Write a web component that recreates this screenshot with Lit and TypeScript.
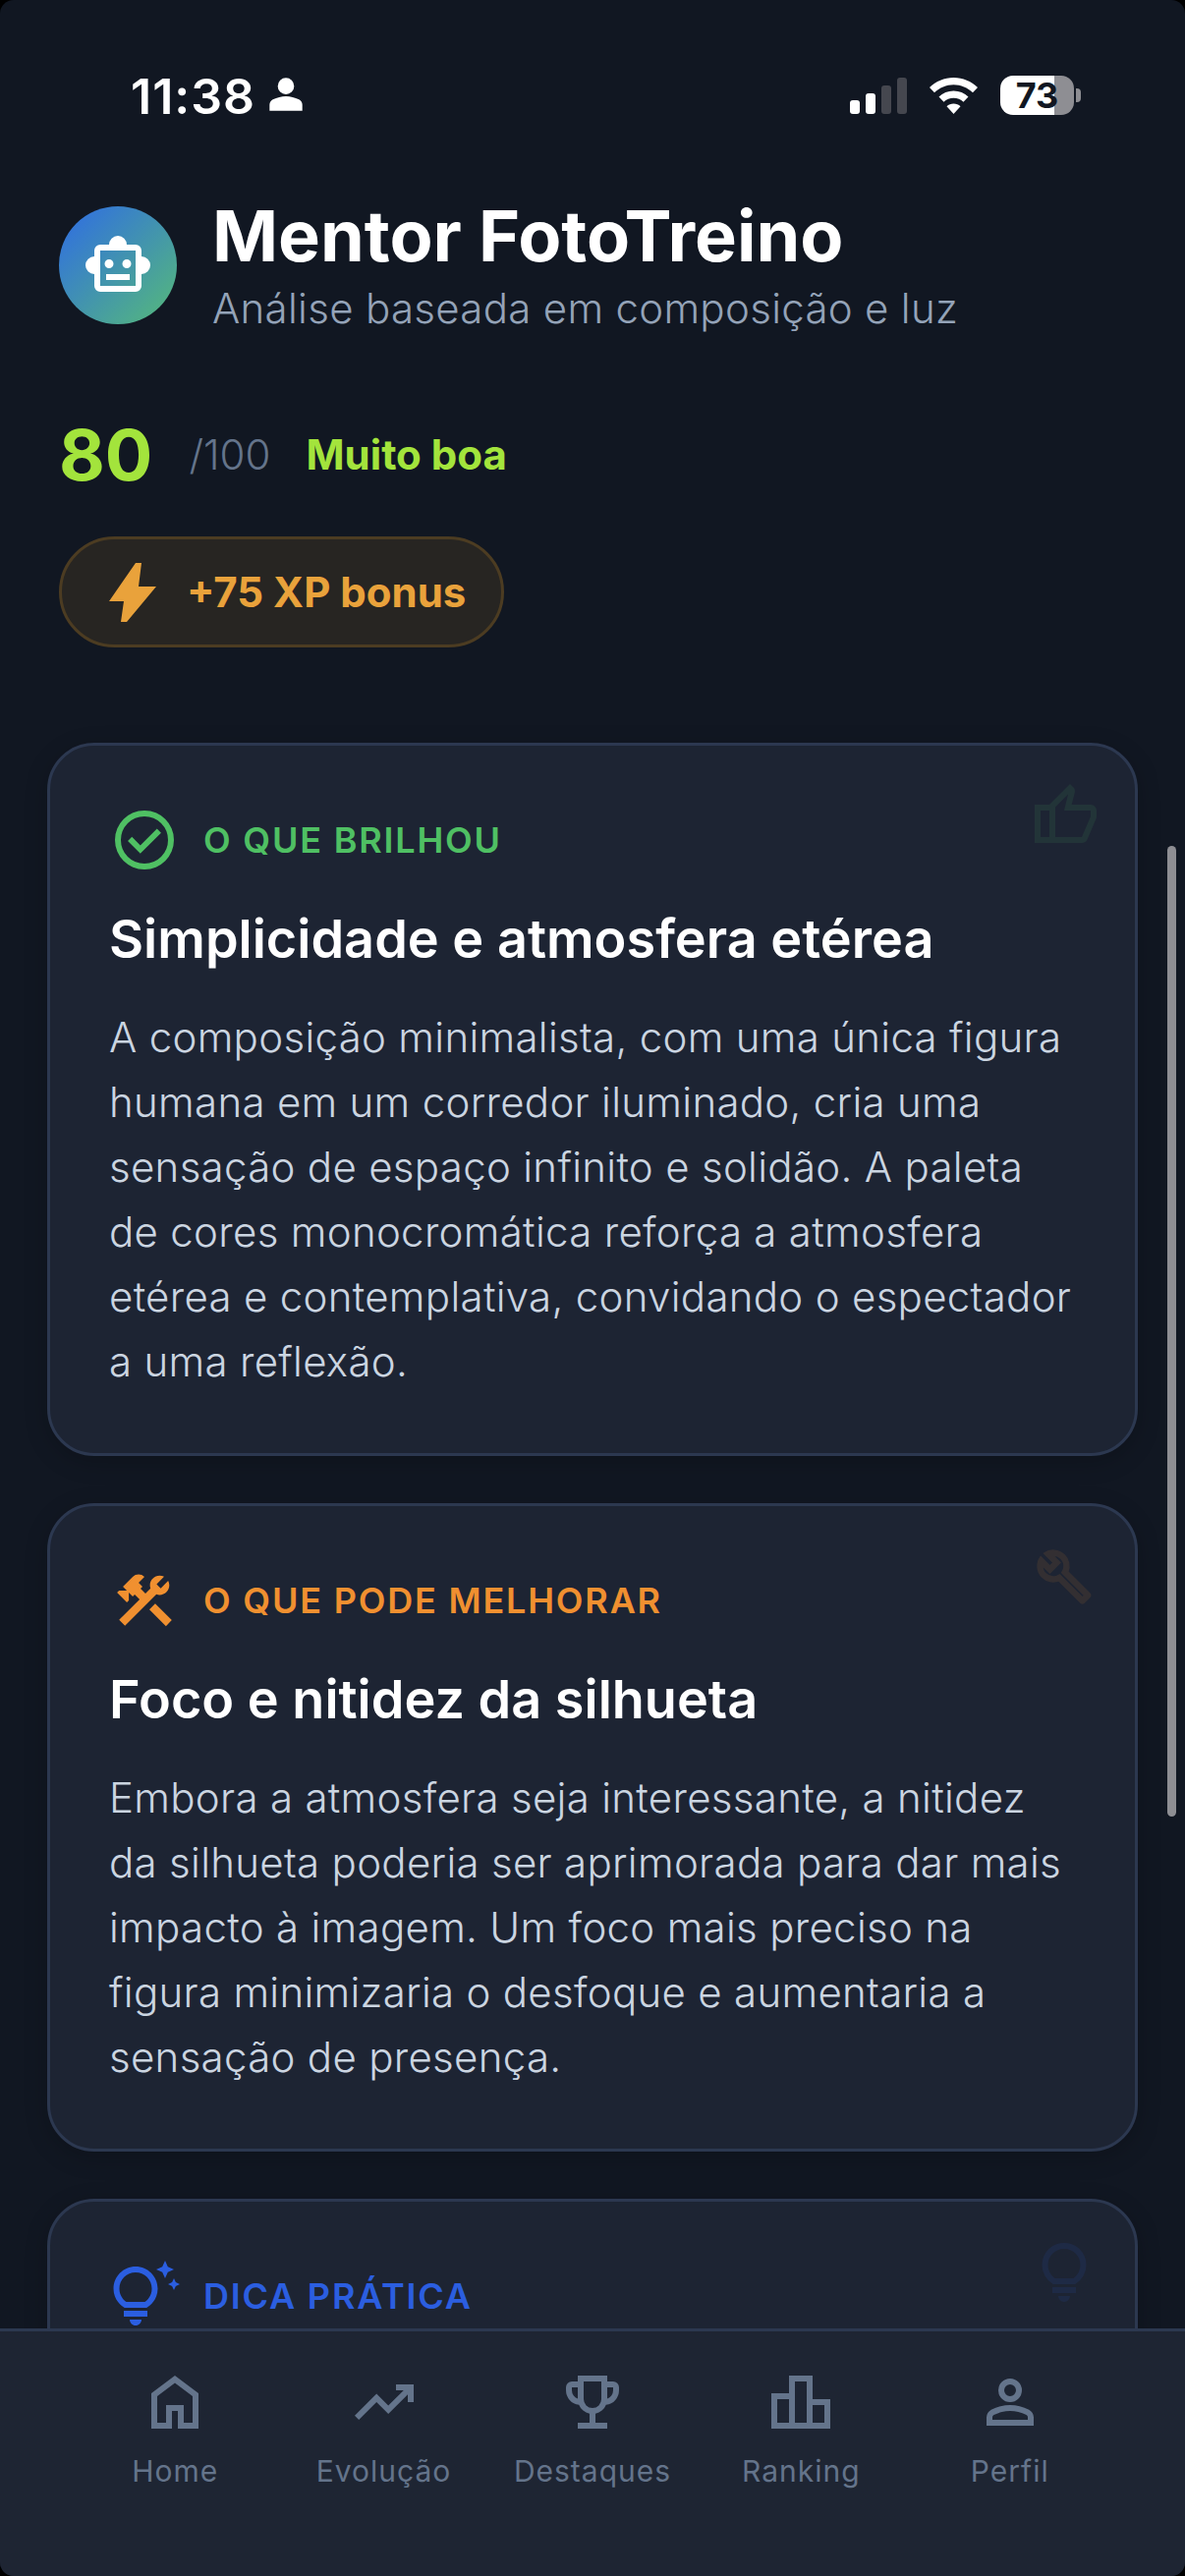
import { LitElement, html, css, svg } from "lit";
import { customElement } from "lit/decorators.js";

const SYM = "0 -960 960 960";
const P = {
  person: "M480-480q-66 0-113-47t-47-113q0-66 47-113t113-47q66 0 113 47t47 113q0 66-47 113t-113 47ZM160-160v-112q0-34 17.5-62.5T224-378q62-31 126-46.5T480-440q66 0 130 15.5T736-378q29 15 46.5 43.5T800-272v112H160Z",
  personO: "M480-480q-66 0-113-47t-47-113q0-66 47-113t113-47q66 0 113 47t47 113q0 66-47 113t-113 47ZM160-160v-112q0-34 17.5-62.5T224-378q62-31 126-46.5T480-440q66 0 130 15.5T736-378q29 15 46.5 43.5T800-272v112H160Zm80-80h480v-32q0-11-5.5-20T700-306q-54-27-109-40.5T480-360q-56 0-111 13.5T260-306q-9 5-14.5 14t-5.5 20v32Zm240-320q33 0 56.5-23.5T560-640q0-33-23.5-56.5T480-720q-33 0-56.5 23.5T400-640q0 33 23.5 56.5T480-560Zm0-80Zm0 400Z",
  robot: "M160-360q-50 0-85-35t-35-85q0-50 35-85t85-35v-80q0-33 23.5-56.5T240-760h120q0-50 35-85t85-35q50 0 85 35t35 85h120q33 0 56.5 23.5T800-680v80q50 0 85 35t35 85q0 50-35 85t-85 35v160q0 33-23.5 56.5T720-120H240q-33 0-56.5-23.5T160-200v-160Zm200-80q25 0 42.5-17.5T420-500q0-25-17.5-42.5T360-560q-25 0-42.5 17.5T300-500q0 25 17.5 42.5T360-440Zm240 0q25 0 42.5-17.5T660-500q0-25-17.5-42.5T600-560q-25 0-42.5 17.5T540-500q0 25 17.5 42.5T600-440ZM320-280h320v-80H320v80Zm-80 80h480v-480H240v480Zm240-240Z",
  bolt: "M320-80l40-280H160l360-520h80l-40 320h240L400-80h-80Z",
  check: "m424-296 282-282-56-56-226 226-114-114-56 56 170 170Zm56 216q-83 0-156-31.5T197-197q-54-54-85.5-127T80-480q0-83 31.5-156T197-763q54-54 127-85.5T480-880q83 0 156 31.5T763-763q54 54 85.5 127T880-480q0 83-31.5 156T763-197q-54 54-127 85.5T480-80Zm0-80q134 0 227-93t93-227q0-134-93-227t-227-93q-134 0-227 93t-93 227q0 134 93 227t227 93Zm0-320Z",
  thumb: "M720-120H280v-520l280-280 50 50q7 7 11.5 19t4.5 23v14l-44 174h258q32 0 56 24t24 56v80q0 7-2 15t-4 15L794-168q-9 20-30 34t-44 14Zm-360-80h360l120-280v-80H480l54-220-174 174v406Zm0-406v406-406Zm-80-34v80H160v360h120v80H80v-520h200Z",
  bulb: "M480-80q-33 0-56.5-23.5T400-160h160q0 33-23.5 56.5T480-80ZM320-200v-80h320v80H320Zm10-120q-69-41-109.5-110T180-580q0-125 87.5-212.5T480-880q125 0 212.5 87.5T780-580q0 81-40.5 150T630-320H330Zm24-80h252q45-32 69.5-79T700-580q0-92-64-156t-156-64q-92 0-156 64t-64 156q0 54 24.5 101t69.5 79Zm126 0Z",
  home: "M240-200h120v-240h240v240h120v-360L480-740 240-560v360Zm-80 80v-480l320-240 320 240v480H520v-240h-80v240H160Zm320-350Z",
  trend: "m136-240-56-56 296-298 160 160 208-206H640v-80h240v240h-80v-104L536-320 376-480 136-240Z",
  trophy: "M280-120v-80h160v-124q-49-11-87.5-41.5T296-442q-75-9-125.5-65.5T120-640v-40q0-33 23.5-56.5T200-760h80v-80h400v80h80q33 0 56.5 23.5T840-680v40q0 76-50.5 132.5T664-442q-18 46-56.5 76.5T520-324v124h160v80H280Zm0-408v-152h-80v40q0 38 22 68.5t58 43.5Zm200 128q50 0 85-35t35-85v-240H360v240q0 50 35 85t85 35Zm200-128q36-13 58-43.5t22-68.5v-40h-80v152Zm-200-52Z",
  board: "M160-200h160v-320H160v320Zm240 0h160v-560H400v560Zm240 0h160v-240H640v240ZM80-120v-480h240v-240h320v320h240v400H80Z",
};
const TOOLS = "M13.78 15.3l6 6 2.11-2.16-6-6-2.11 2.16zM17.5 10c1.93 0 3.5-1.57 3.5-3.5 0-.58-.16-1.12-.41-1.6l-2.7 2.7-1.49-1.49 2.7-2.7c-.48-.25-1.02-.41-1.6-.41C15.57 3 14 4.57 14 6.5c0 .41.08.8.21 1.16l-1.85 1.85-1.78-1.78.71-.71-1.41-1.41L12 3.49c-1.17-1.17-3.07-1.17-4.24 0L4.22 7.03l1.41 1.41H2.81l-.71.71 3.54 3.54.71-.71V9.15l1.41 1.41.71-.71 1.78 1.78-7.41 7.41 2.12 2.12L16.34 9.79c.36.13.75.21 1.16.21z";
const WRENCH = "M22.61 18.99l-9.08-9.08c.93-2.34.45-5.1-1.44-7C9.79.61 6.21.4 3.66 2.25L7.5 6.1 6.08 7.51 2.25 3.69C.39 6.23.6 9.82 2.9 12.11c1.86 1.86 4.57 2.35 6.89 1.48l9.11 9.11c.39.39 1.02.39 1.41 0l2.3-2.3c.4-.38.4-1.01 0-1.41zm-3 1.6l-9.46-9.46c-.61.45-1.29.72-2 .82-1.36.2-2.79-.21-3.83-1.25C3.37 9.76 2.93 8.5 3 7.26l3.09 3.09 4.24-4.24-3.09-3.09c1.24-.07 2.49.37 3.44 1.31 1.08 1.08 1.49 2.57 1.24 3.96-.12.71-.42 1.37-.88 1.96l9.45 9.45-.88.88z";
const TIPS = "M7 20h4c0 1.1-.9 2-2 2s-2-.9-2-2zm-2-1h8v-2H5v2zm11.5-9.5c0 3.82-2.66 5.86-3.77 6.5H5.27c-1.11-.64-3.77-2.68-3.77-6.5C1.5 5.36 4.86 2 9 2s7.5 3.36 7.5 7.5zm-2 0C14.5 6.47 12.03 4 9 4S3.5 6.47 3.5 9.5c0 2.47 1.49 3.89 2.35 4.5h6.3c.86-.61 2.35-2.03 2.35-4.5zm6.87-2.13L20 8l1.37.63L22 10l.63-1.37L24 8l-1.37-.63L22 6l-.63 1.37zM19 6l.94-2.06L22 3l-2.06-.94L19 0l-.94 2.06L16 3l2.06.94L19 6z";

const icon = (d: string, cls = "ic", vb = SYM) =>
  html`<svg class=${cls} viewBox=${vb} aria-hidden="true">${svg`<path d=${d}></path>`}</svg>`;

const NAV = [
  ["Home", P.home],
  ["Evolução", P.trend],
  ["Destaques", P.trophy],
  ["Ranking", P.board],
  ["Perfil", P.personO],
];

@customElement("app-root")
export class AppRoot extends LitElement {
  static styles = css`
    :host { display: block; width: 1206px; height: 2622px; background: #000; font-family: Inter, "Liberation Sans", sans-serif; }
    * { box-sizing: border-box; }
    svg { display: block; fill: currentColor; flex: none; }
    .ic { width: 72px; height: 72px; }
    .thick { width: 72px; height: 72px; stroke: currentColor; stroke-width: 0.6px; }
    .phone { position: relative; height: 2622px; border-radius: 14px; overflow: hidden; background: #111722; display: flex; flex-direction: column; }

    .status { flex: none; height: 171px; padding: 78px 106px 0 133px; display: flex; justify-content: space-between; align-items: flex-start; color: #fff; }
    .time-wrap { display: flex; align-items: center; gap: 6px; height: 40px; }
    .time { font-size: 50px; font-weight: 600; line-height: 40px; letter-spacing: 1px; }
    .me { width: 50px; height: 50px; margin-top: -4px; }
    .sys { display: flex; align-items: flex-start; height: 40px; margin-top: -1px; }
    .signal { display: flex; align-items: flex-end; gap: 6px; height: 37px; margin-top: 2px; }
    .signal i { display: block; width: 10px; border-radius: 3px; background: #fff; }
    .signal i.off { background: #45474f; }
    .wifi { width: 49px; height: 37px; margin: 2px 23px 0 23px; }
    .batt { position: relative; width: 75px; height: 40px; border-radius: 13px; background: linear-gradient(90deg, #fff 73%, #8e8e93 73%); color: #111722; font-size: 36px; font-weight: 700; line-height: 40px; text-align: center; }
    .nub { width: 5px; height: 14px; margin: 13px 0 0 2px; border-radius: 0 4px 4px 0; background: #8e8e93; }

    .head { flex: none; display: flex; align-items: center; gap: 36px; padding: 0 60px; height: 150px; margin-top: 24px; }
    .avatar { width: 120px; height: 120px; border-radius: 50%; flex: none; display: grid; place-items: center; color: #fff; background: linear-gradient(135deg, #2e6be6, #56bb78); }
    h1 { margin: 0; font-size: 72px; line-height: 80px; font-weight: 700; color: #fff; }
    .sub { font-size: 42px; line-height: 54px; font-weight: 300; letter-spacing: 0.3px; color: #94a3b8; margin-top: 7px; }

    .score { flex: none; display: flex; align-items: center; padding: 0 60px; margin-top: 75px; height: 84px; }
    .num { font-size: 72px; font-weight: 700; color: #a3e43c; margin-right: 37px; }
    .max { font-size: 42px; font-weight: 300; color: #64748b; margin-right: 36px; }
    .verdict { font-size: 42px; font-weight: 700; color: #a3e43c; }

    .xp-row { flex: none; padding: 0 60px; margin-top: 42px; display: flex; }
    .xp { display: flex; align-items: center; gap: 19px; height: 113px; padding: 0 36px; border: 3px solid #4c3c22; border-radius: 60px; background: #272522; color: #e9a23b; font-size: 42px; font-weight: 700; }

    .scroll { flex: 1; min-height: 0; overflow: hidden; padding: 97px 48px 0; display: flex; flex-direction: column; gap: 48px; }
    .card { position: relative; flex: none; padding: 60px; border: 3px solid #2c3850; border-radius: 48px; background: #1d2433; box-shadow: 0 6px 24px rgba(0, 0, 0, .2); }
    .ghost { position: absolute; top: 36px; right: 36px; opacity: .1; }
    .tag { display: flex; align-items: center; gap: 24px; height: 72px; font-size: 36px; font-weight: 600; letter-spacing: 1.8px; }
    .green { color: #4fc063; }
    .orange { color: #f09030; }
    .blue { color: #2b5ee0; }
    h2 { margin: 24px 0 27px; font-size: 54px; line-height: 81px; font-weight: 600; color: #fff; }
    p { margin: 0; font-size: 42px; line-height: 66px; font-weight: 300; letter-spacing: 0.3px; color: #cbd5e1; }

    .bar { position: absolute; left: 1188px; top: 861px; width: 9px; height: 988px; border-radius: 5px; background: #8e8e93; }

    nav { flex: none; height: 252px; padding: 36px 72px 0; border-top: 3px solid #2c3850; background: #1e2533; display: grid; grid-template-columns: repeat(5, 1fr); align-items: start; color: #64748b; }
    .item { display: flex; flex-direction: column; align-items: center; }
    .item span { font-size: 30px; line-height: 40px; font-weight: 400; margin-top: 14px; letter-spacing: 1px; white-space: nowrap; }
  `;

  render() {
    return html`
      <div class="phone">
        <div class="status">
          <div class="time-wrap"><span class="time">11:38</span>${icon(P.person, "me")}</div>
          <div class="sys">
            <div class="signal">
              <i style="height:14px"></i><i style="height:21px"></i><i class="off" style="height:29px"></i><i class="off" style="height:37px"></i>
            </div>
            <svg class="wifi" viewBox="0 0 49 37">
              <path d="M24.5 0C15 0 6.6 3.8 0 10l5 5.3C10.200 10.500 17 7.300 24.500 7.300S38.800 10.500 44 15.300l5-5.300C42.400 3.800 34 0 24.500 0Z"></path>
              <path d="M24.500 13.500c-5.800 0-11 2.300-15 6l5 5.300c2.700-2.500 6.200-4 10-4s7.300 1.500 10 4l5-5.300c-4-3.700-9.200-6-15-6Z"></path>
              <path d="M24.500 26.500c-2.700 0-5.100 1-7 2.700l7 7.800 7-7.800c-1.900-1.700-4.300-2.700-7-2.700Z"></path>
            </svg>
            <div class="batt">73</div>
            <div class="nub"></div>
          </div>
        </div>

        <header class="head">
          <div class="avatar">${icon(P.robot)}</div>
          <div>
            <h1>Mentor FotoTreino</h1>
            <div class="sub">Análise baseada em composição e luz</div>
          </div>
        </header>

        <div class="score">
          <span class="num">80</span><span class="max">/100</span><span class="verdict">Muito boa</span>
        </div>

        <div class="xp-row"><div class="xp">${icon(P.bolt)}<span>+75 XP bonus</span></div></div>

        <main class="scroll">
          <section class="card">
            <div class="ghost green">${icon(P.thumb)}</div>
            <div class="tag green">${icon(P.check)}<span>O QUE BRILHOU</span></div>
            <h2>Simplicidade e atmosfera etérea</h2>
            <p>A composição minimalista, com uma única figura humana em um corredor iluminado, cria uma sensação de espaço infinito e solidão. A paleta de cores monocromática reforça a atmosfera etérea e contemplativa, convidando o espectador a uma reflexão.</p>
          </section>
          <section class="card">
            <div class="ghost orange">${icon(WRENCH, "thick", "-2.7 -2.7 29.400 29.400")}</div>
            <div class="tag orange">${icon(TOOLS, "ic", "-0.800 -0.800 25.600 25.600")}<span>O QUE PODE MELHORAR</span></div>
            <h2>Foco e nitidez da silhueta</h2>
            <p>Embora a atmosfera seja interessante, a nitidez da silhueta poderia ser aprimorada para dar mais impacto à imagem. Um foco mais preciso na figura minimizaria o desfoque e aumentaria a sensação de presença.</p>
          </section>
          <section class="card">
            <div class="ghost blue">${icon(P.bulb)}</div>
            <div class="tag blue">${icon(TIPS, "ic", "0 0 24 24")}<span>DICA PRÁTICA</span></div>
          </section>
        </main>

        <nav>
          ${NAV.map(([label, d]) => html`<div class="item">${icon(d)}<span>${label}</span></div>`)}
        </nav>

        <div class="bar"></div>
      </div>
    `;
  }
}
